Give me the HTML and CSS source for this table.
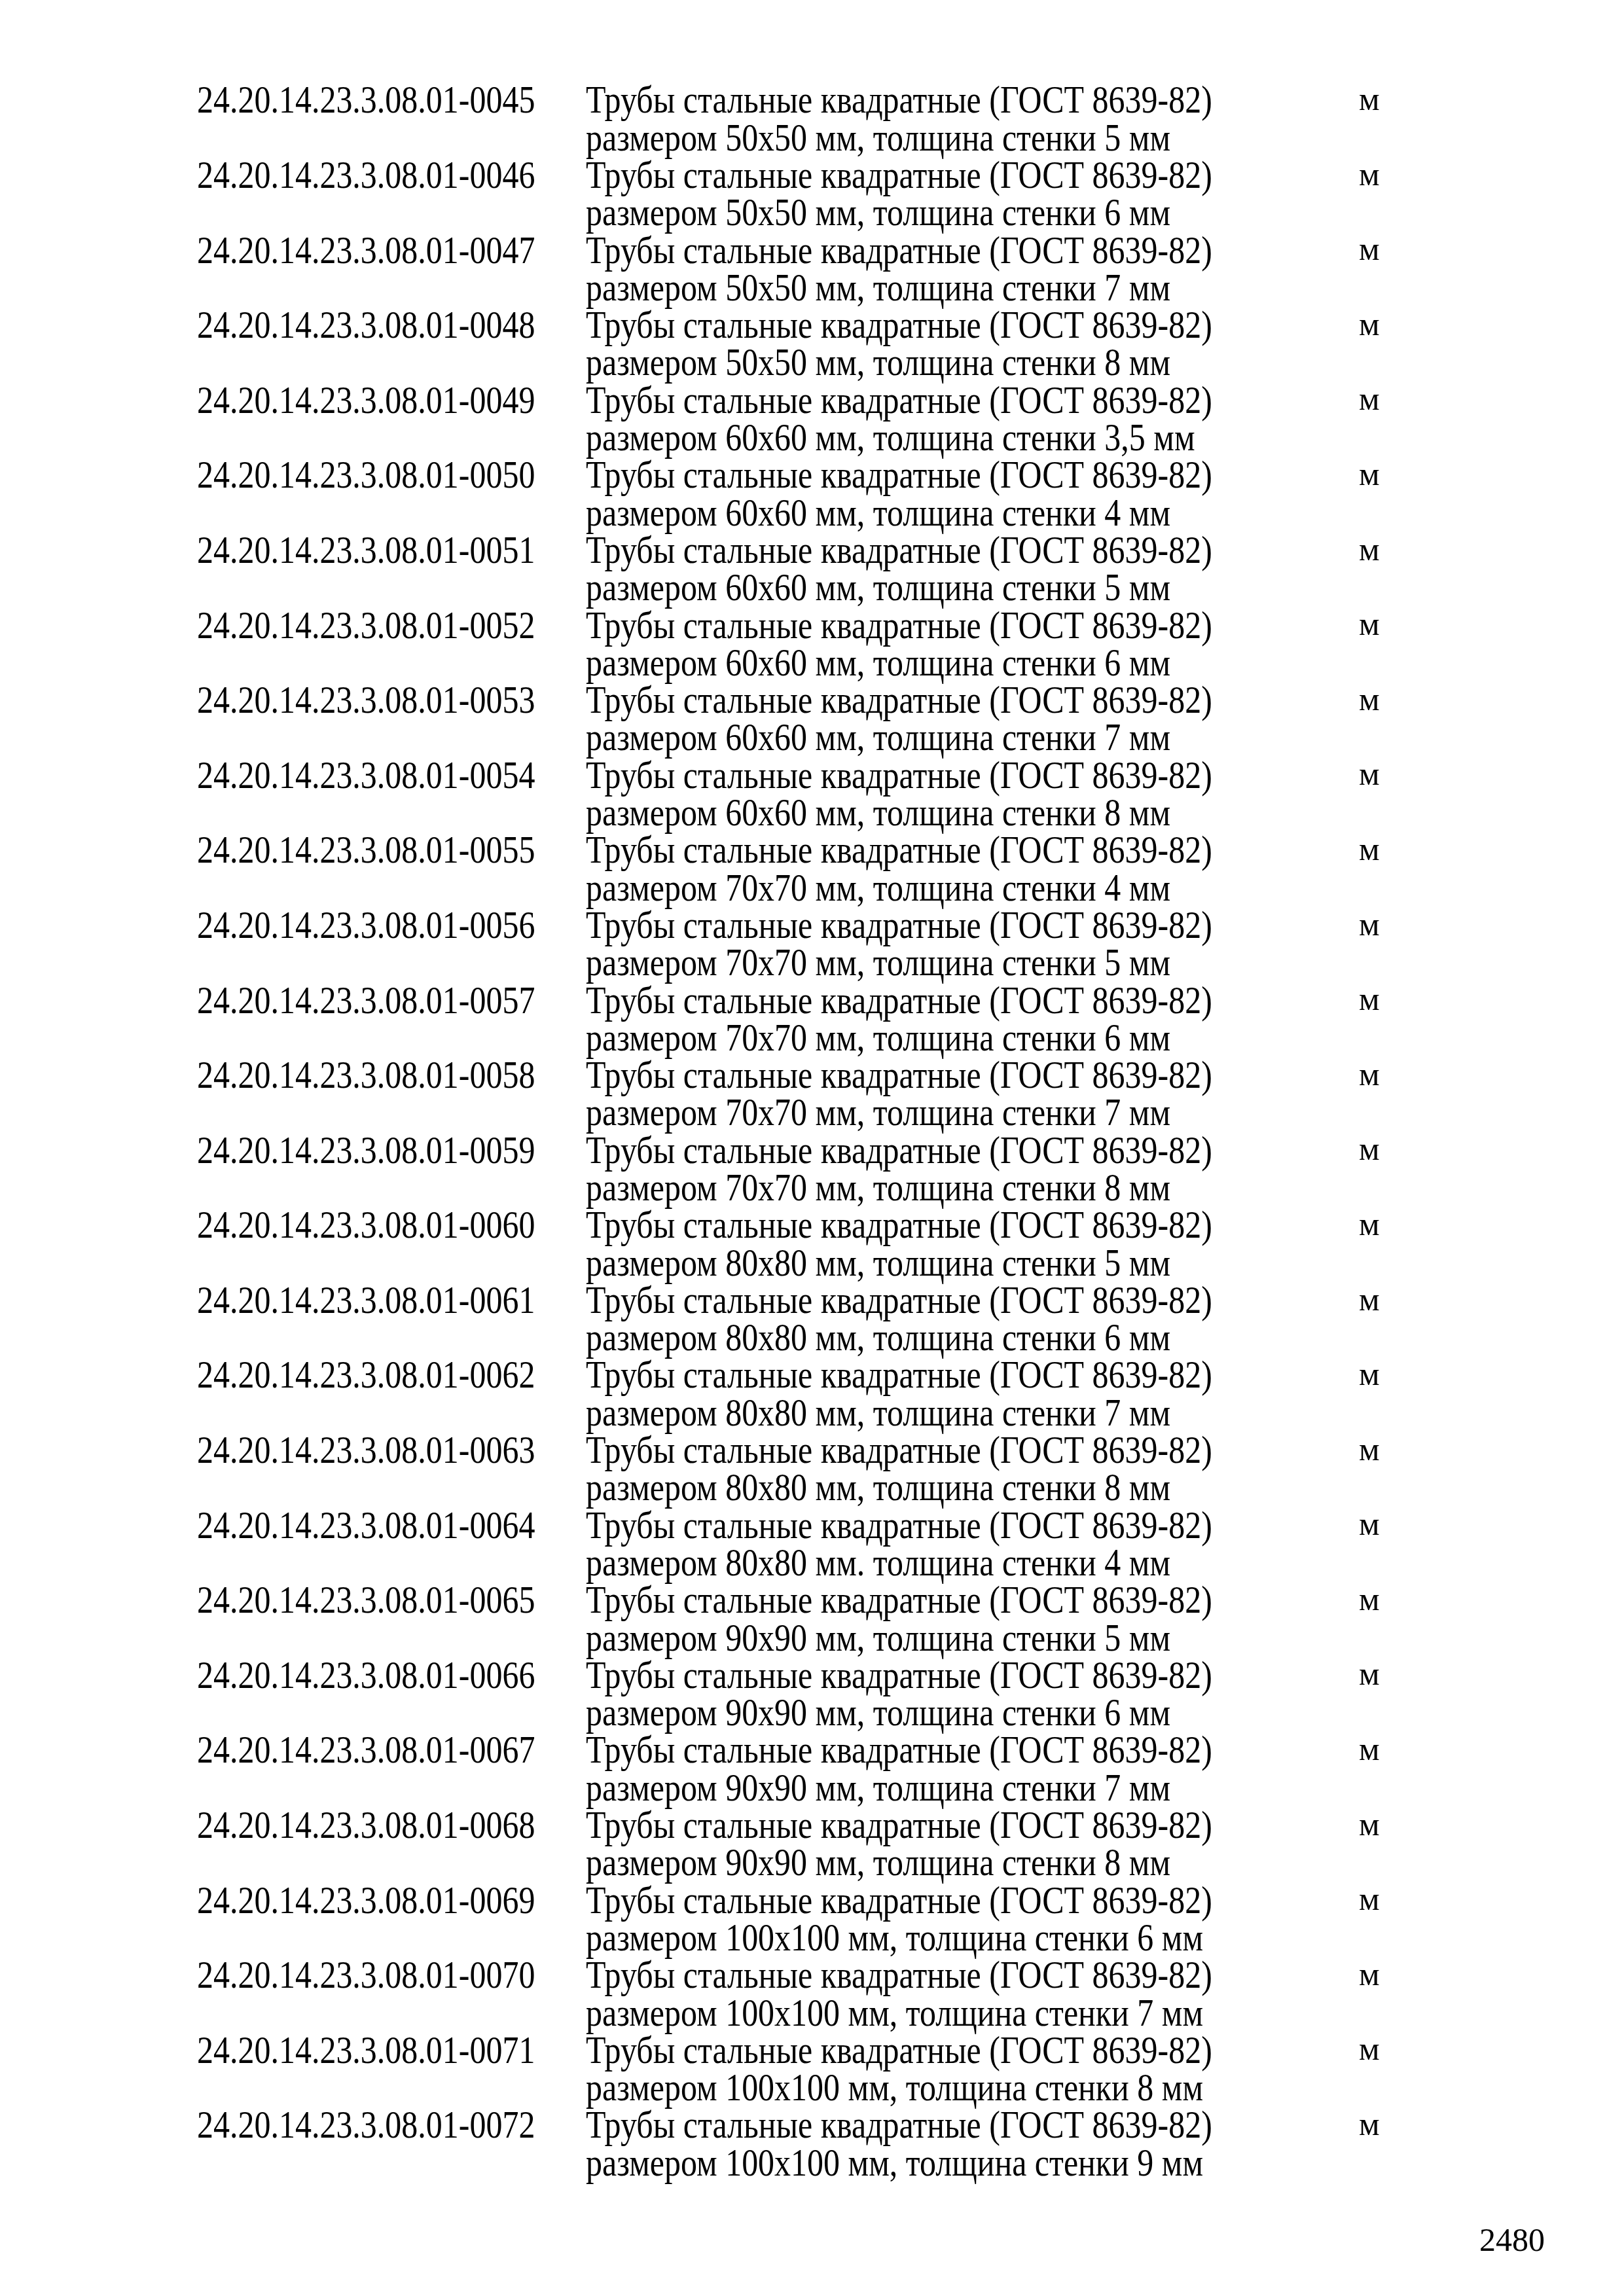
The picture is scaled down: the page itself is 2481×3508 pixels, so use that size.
FILE: index.html
```html
<!DOCTYPE html>
<html lang="ru">
<head>
    <meta charset="UTF-8">
    <link rel="stylesheet" href="styles.css">
    <title>2480</title>
</head>
<body>
    <div class="sheet">
        <div class="list" id="list"></div>
        <div class="page-num">2480</div>
    </div>

    <script>
        // code suffix, size, wall thickness, separator after "мм"
        const rows = [
            ['0045', '50x50', '5'], ['0046', '50x50', '6'], ['0047', '50x50', '7'], ['0048', '50x50', '8'],
            ['0049', '60x60', '3,5'], ['0050', '60x60', '4'], ['0051', '60x60', '5'], ['0052', '60x60', '6'],
            ['0053', '60x60', '7'], ['0054', '60x60', '8'], ['0055', '70x70', '4'], ['0056', '70x70', '5'],
            ['0057', '70x70', '6'], ['0058', '70x70', '7'], ['0059', '70x70', '8'], ['0060', '80x80', '5'],
            ['0061', '80x80', '6'], ['0062', '80x80', '7'], ['0063', '80x80', '8'], ['0064', '80x80', '4', '.'],
            ['0065', '90x90', '5'], ['0066', '90x90', '6'], ['0067', '90x90', '7'], ['0068', '90x90', '8'],
            ['0069', '100x100', '6'], ['0070', '100x100', '7'], ['0071', '100x100', '8'], ['0072', '100x100', '9']
        ];

        const list = document.getElementById('list');
        rows.forEach(function (r) {
            const sep = r[3] || ',';
            const row = document.createElement('div');
            row.className = 'row';
            row.innerHTML =
                '<div class="code">24.20.14.23.3.08.01-' + r[0] + '</div>' +
                '<div class="desc"><div>Трубы стальные квадратные (ГОСТ 8639-82)</div>' +
                '<div>размером ' + r[1] + ' мм' + sep + ' толщина стенки ' + r[2] + ' мм</div></div>' +
                '<div class="unit">м</div>';
            list.appendChild(row);
        });
    </script>
</body>
</html>
```
FILE: styles.css
```css
body {
    margin: 0;
    background: #fff;
    color: #000;
    font-family: "Liberation Serif", "Times New Roman", serif;
}

.sheet {
    width: 2481px;
    height: 3508px;
    padding-top: 124.4px;
    box-sizing: border-box;
}

.list {
    padding-left: 301px;
}

.row {
    display: grid;
    grid-template-columns: 594px 1181px auto;
    line-height: 57.3px;
}

/* table text is set tall and narrow */
.code,
.desc {
    font-size: 59px;
    white-space: nowrap;
    transform: scaleX(0.847);
    transform-origin: left top;
}

.unit {
    font-size: 50px;
    margin-top: -1.4px;
}

.page-num {
    margin-top: 61.3px;
    padding-right: 121px;
    text-align: right;
    font-size: 50px;
    line-height: 57.3px;
}
```
